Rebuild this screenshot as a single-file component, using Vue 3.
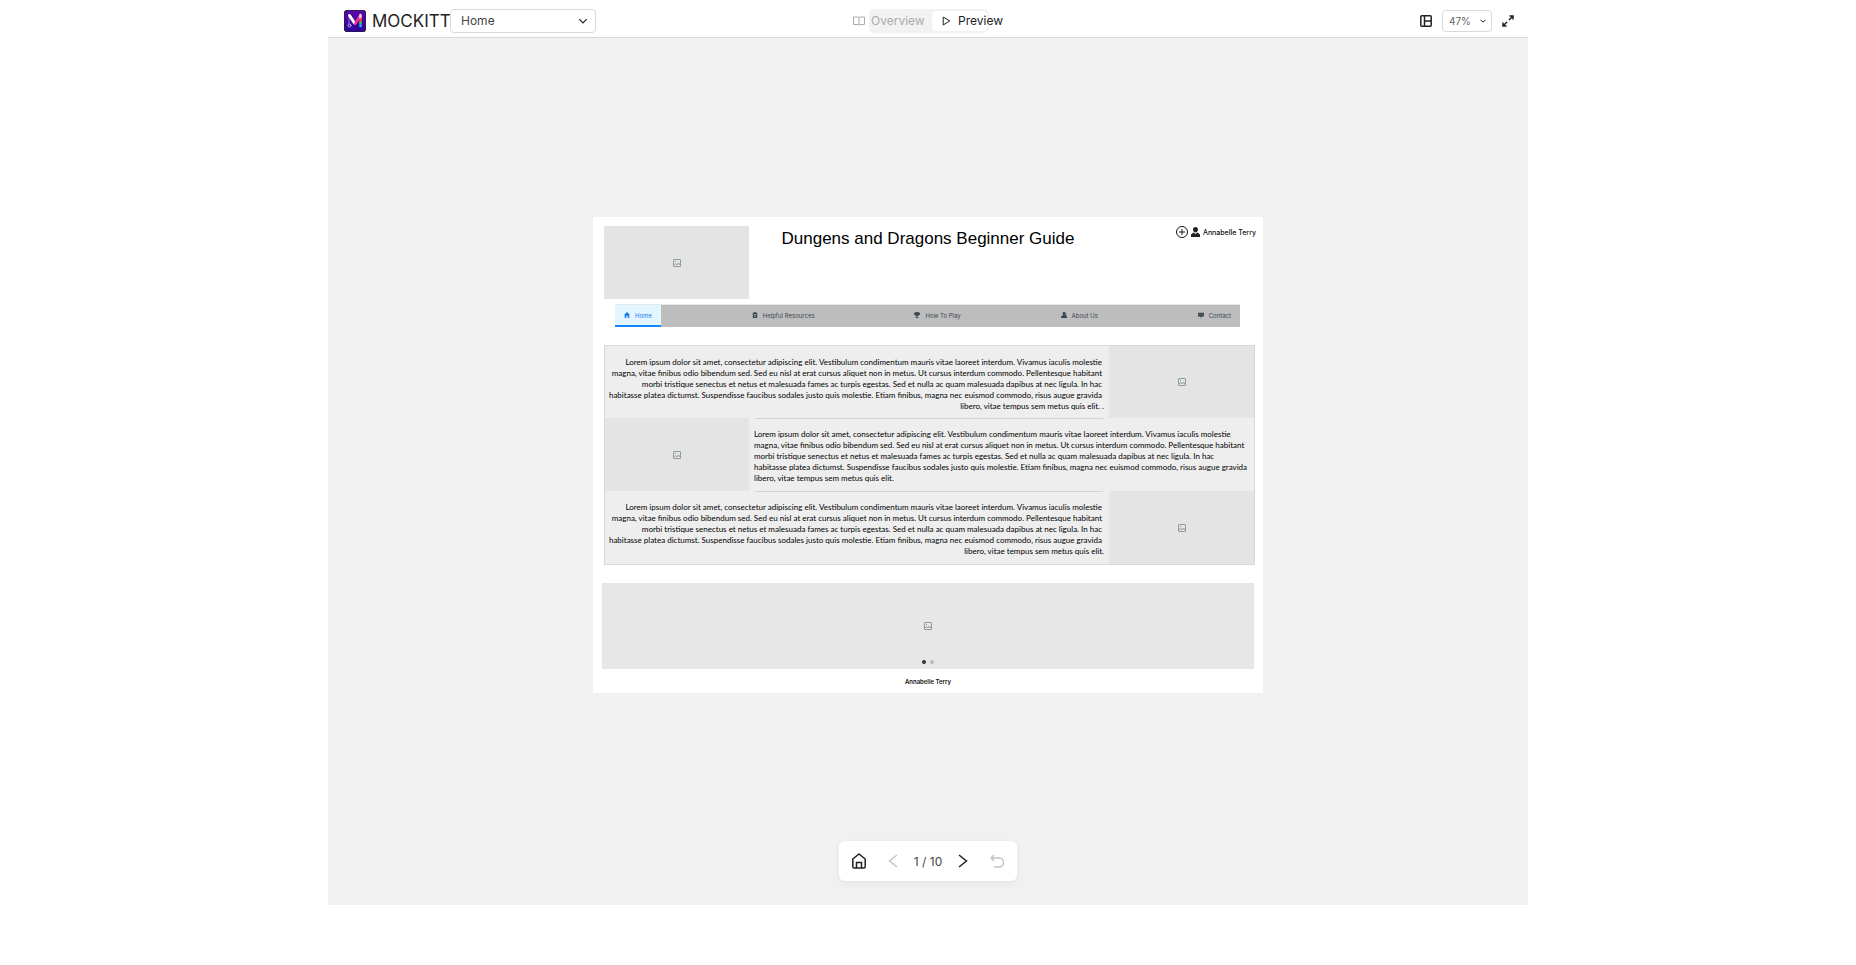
<script setup>
import { ref } from 'vue'

const screen = ref('Home')
const zoom = ref('47%')

const tabs = [
  { label: 'Home', icon: 'M4 0 8 4H7V8H5V5H3V8H1V4H0Z', active: true },
  { label: 'Helpful Resources', icon: 'M1 1H3V0H5V1H7V8H1ZM2.500 3V4H5.500V3ZM2.500 5V6H5.500V5Z' },
  { label: 'How To Play', icon: 'M2 0H6V1H8V3L6 5H4.700V7H6V8H2V7H3.300V5H2L0 3V1H2Z' },
  { label: 'About Us', icon: 'M3 0H5L6 2 5 4 8 6V8H0V6L3 4 2 2ZM6 1 7 2V4L8 5H6Z' },
  { label: 'Contact', icon: 'M0 1H8V6H5L4 8 3 6H0ZM2 3V4H3V3ZM5 3V4H6V3Z' }
]

const lorem = [
  'Lorem ipsum dolor sit amet, consectetur adipiscing elit. Vestibulum condimentum mauris vitae laoreet interdum. Vivamus iaculis molestie',
  'magna, vitae finibus odio bibendum sed. Sed eu nisl at erat cursus aliquet non in metus. Ut cursus interdum commodo. Pellentesque habitant',
  'morbi tristique senectus et netus et malesuada fames ac turpis egestas. Sed et nulla ac quam malesuada dapibus at nec ligula. In hac',
  'habitasse platea dictumst. Suspendisse faucibus sodales justo quis molestie. Etiam finibus, magna nec euismod commodo, risus augue gravida'
]
const rows = [
  { flip: false, last: 'libero, vitae tempus sem metus quis elit. .' },
  { flip: true, last: 'libero, vitae tempus sem metus quis elit.' },
  { flip: false, last: 'libero, vitae tempus sem metus quis elit.' }
]
</script>

<template>
  <div class="app">
    <header class="bar">
      <div class="bar-left">
        <svg class="logo" viewBox="0 0 22 22" aria-hidden="true">
          <defs>
            <linearGradient id="logo-bg" x1="0" y1="0" x2="0" y2="1">
              <stop offset="0" stop-color="#5a08a8" />
              <stop offset="1" stop-color="#2c0599" />
            </linearGradient>
          </defs>
          <rect width="22" height="22" rx="4" fill="url(#logo-bg)" />
          <g fill="none" stroke-linecap="round">
            <path d="M5 15V7" stroke="#8d6ad0" stroke-width="1" />
            <circle cx="5.500" cy="15.500" r="1.500" stroke="#b9a5e6" stroke-width="1" />
            <path d="M5.500 5.500 10.500 13" stroke="#fff" stroke-width="3" />
            <path d="M11.500 13.500 15.500 6.500" stroke="#f02f9c" stroke-width="2.600" />
            <path d="M16.500 5V7.500" stroke="#ffc2d4" stroke-width="2.600" />
            <path d="M16.500 9.500V11" stroke="#f44" stroke-width="2.600" />
            <path d="M16.500 12.500V13.500" stroke="#35c759" stroke-width="2.600" />
            <path d="M16.500 15.500V16" stroke="#29b6f6" stroke-width="2.600" />
          </g>
        </svg>
        <span class="brand">MOCKITT</span>
        <div class="pick pick-screen">
          <select v-model="screen" aria-label="Screen">
            <option>Home</option>
          </select>
          <svg viewBox="0 0 8 8" aria-hidden="true"><path d="M1 2.500 4 5.500 7 2.500" /></svg>
        </div>
      </div>

      <div class="modes">
        <button type="button" class="mode mode-overview">
          <svg width="12" height="10" viewBox="0 0 12 10" aria-hidden="true">
            <path d="M.5 1H5L6 1.500 7 1H11.500V8.500H7L6 9.500 5 8.500H.5ZM6 1.500V9" />
          </svg>
          Overview
        </button>
        <button type="button" class="mode mode-preview">
          <svg width="9" height="10" viewBox="0 0 9 10" aria-hidden="true">
            <path d="M1.200 1V9L7.800 5Z" />
          </svg>
          Preview
        </button>
      </div>

      <div class="bar-right">
        <button type="button" class="icon" aria-label="Layout">
          <svg width="12" height="12" viewBox="0 0 12 12">
            <rect x=".8" y=".8" width="10.400" height="10.400" rx="1" />
            <path d="M4.500 1V11M4.500 6H11" />
          </svg>
        </button>
        <div class="pick pick-zoom">
          <select v-model="zoom" aria-label="Zoom">
            <option>47%</option>
          </select>
          <svg viewBox="0 0 8 8" aria-hidden="true"><path d="M1.500 3 4 5 6.500 3" /></svg>
        </div>
        <button type="button" class="icon" aria-label="Full screen">
          <svg width="12" height="12" viewBox="0 0 12 12">
            <path d="M7 5 11 1M7.500 1H11V4.500M5 7 1 11M1 7.500V11H4.500" />
          </svg>
        </button>
      </div>
    </header>

    <main class="stage">
      <article class="page">
        <div class="top">
          <div class="ph"><svg viewBox="0 0 8 8"><rect x=".5" y=".5" width="7" height="7" rx=".5" /><path d="M1 6 2.500 4.500 4 6 5.500 4 7 6M2 2.500H3" /></svg></div>
          <h1>Dungens and Dragons Beginner Guide</h1>
          <div class="user">
            <button type="button" class="add" aria-label="Add">
              <svg width="12" height="12" viewBox="0 0 12 12"><circle cx="6" cy="6" r="5.500" /><path d="M6 3V9M3 6H9" /></svg>
            </button>
            <svg class="person" width="9" height="10" viewBox="0 0 9 10" aria-hidden="true">
              <path d="M4.500 0C6 0 7 1 7 2.500S6 5.500 4.500 5.500 2 4 2 2.500 3 0 4.500 0ZM2.500 5.500 4.500 7 6.500 5.500 9 7.500V10H0V7.500Z" />
            </svg>
            <span>Annabelle Terry</span>
          </div>
        </div>

        <nav class="tabs">
          <a v-for="t in tabs" :key="t.label" href="#" :class="{ active: t.active }">
            <svg width="6" height="6" viewBox="0 0 8 8" aria-hidden="true"><path fill-rule="evenodd" :d="t.icon" /></svg>
            {{ t.label }}
          </a>
        </nav>

        <section class="rows">
          <div v-for="(r, i) in rows" :key="i" class="row" :class="{ flip: r.flip }">
            <p>
              <span v-for="l in lorem" :key="l" class="line full">{{ l }}</span>
              <span class="line">{{ r.last }}</span>
            </p>
            <div class="ph"><svg viewBox="0 0 8 8"><rect x=".5" y=".5" width="7" height="7" rx=".5" /><path d="M1 6 2.500 4.500 4 6 5.500 4 7 6M2 2.500H3" /></svg></div>
            <hr v-if="i > 0">
          </div>
        </section>

        <section class="carousel">
          <svg class="pic" viewBox="0 0 8 8"><rect x=".5" y=".5" width="7" height="7" rx=".5" /><path d="M1 6 2.500 4.500 4 6 5.500 4 7 6M2 2.500H3" /></svg>
          <div class="dots">
            <button type="button" class="on" aria-label="Slide 1"></button>
            <button type="button" aria-label="Slide 2"></button>
          </div>
        </section>

        <footer>Annabelle Terry</footer>
      </article>

      <div class="pager">
        <button type="button" aria-label="Home">
          <svg width="14" height="16" viewBox="0 0 14 16"><path d="M.8 6 7 1 13.200 6V13.500Q13.200 15 12 15H2Q.8 15 .8 13.500ZM4.500 15V9.500H9.500V15" /></svg>
        </button>
        <div class="steps">
          <button type="button" class="off" aria-label="Previous">
            <svg width="10" height="14" viewBox="0 0 10 14"><path d="M9 1 1.500 7 9 13" /></svg>
          </button>
          <span class="count">1 / 10</span>
          <button type="button" aria-label="Next">
            <svg width="10" height="14" viewBox="0 0 10 14"><path d="M1 1 8.500 7 1 13" /></svg>
          </button>
        </div>
        <button type="button" class="off" aria-label="Restart">
          <svg width="14" height="14" viewBox="0 0 14 14"><path d="M4 1 1 4 4 7M1 4H9A4.500 4.500 0 0 1 9 13H4" /></svg>
        </button>
      </div>
    </main>
  </div>
</template>

<style>
body {
  background: #fff;
}
</style>

<style scoped>
* {
  box-sizing: border-box;
}
.app {
  display: flex;
  flex-direction: column;
  max-width: 1200px;
  height: calc(100vh - 60px);
  margin: 0 auto;
  font-family: Inter, "Liberation Sans", sans-serif;
  color: #222;
}
button {
  padding: 0;
  border: 0;
  background: none;
  font: inherit;
  color: inherit;
}
svg {
  display: block;
  flex: none;
  fill: none;
  stroke: currentColor;
}
.bar {
  display: grid;
  grid-template-columns: 1fr auto 1fr;
  align-items: center;
  height: 38px;
  padding: 4px 14px 0 16px;
  border-bottom: 1px solid #d9d9d9;
  background: #fff;
}
.bar-left,
.bar-right {
  display: flex;
  align-items: center;
}
.bar-right {
  justify-content: flex-end;
  gap: 10px;
}
.logo {
  width: 22px;
  height: 22px;
}
.brand {
  width: 78px;
  margin-left: 6px;
  font-size: 17px;
  font-weight: 400;
  white-space: nowrap;
  color: #222;
}
.pick {
  display: grid;
  align-items: center;
}
.pick > * {
  grid-area: 1 / 1;
}
.pick select {
  appearance: none;
  width: 100%;
  border: 1px solid #d9d9d9;
  border-radius: 4px;
  background: #fff;
  font-family: inherit;
  color: #444;
}
.pick svg {
  justify-self: end;
  pointer-events: none;
}
.pick-screen {
  width: 146px;
}
.pick-screen select {
  height: 24px;
  padding: 0 10px;
  font-size: 12px;
}
.pick-screen svg {
  width: 10px;
  height: 10px;
  margin-right: 8px;
}
.pick-zoom {
  width: 50px;
}
.pick-zoom select {
  height: 22px;
  padding: 0 6px;
  font-size: 10px;
  color: #666;
}
.pick-zoom svg {
  width: 8px;
  height: 8px;
  margin-right: 5px;
}
.icon svg {
  stroke-width: 1.500;
}
.modes {
  display: flex;
  width: 120px;
  height: 24px;
  padding: 2px;
  border-radius: 5px;
  background: #f2f2f2;
}
.mode {
  display: flex;
  align-items: center;
  font-size: 12px;
  white-space: nowrap;
}
.mode-overview {
  flex: none;
  gap: 6px;
  width: 79px;
  margin-left: -18px;
  color: #aaa;
}
.mode-preview {
  flex: 1;
  gap: 7px;
  min-width: 0;
  padding-left: 10px;
  border-radius: 4px;
  background: #fff;
}
.stage {
  position: relative;
  flex: 1;
  display: flex;
  align-items: center;
  justify-content: center;
  padding-bottom: 33px;
  background: #f1f1f1;
}
.page {
  width: 100%;
  max-width: 670px;
  padding-top: 9px;
  background: #fff;
  color: #111;
}
.ph {
  display: flex;
  align-items: center;
  justify-content: center;
  height: 73px;
  background: #e4e4e4;
}
.ph svg,
.pic {
  width: 8px;
  height: 8px;
  color: #8c9ba3;
}
.top {
  display: grid;
  grid-template-columns: 145px 1fr 149px;
  padding: 0 7px 0 11px;
}
h1 {
  margin: 3px 0 0;
  font-family: "Liberation Sans", Arial, sans-serif;
  font-size: 17px;
  line-height: 20px;
  font-weight: 400;
  text-align: center;
  white-space: nowrap;
  color: #000;
}
.user {
  display: flex;
  align-items: center;
  justify-content: flex-end;
  gap: 3px;
  height: 12px;
  font-size: 7px;
  font-weight: 500;
  white-space: nowrap;
}
.person {
  fill: #222;
  stroke: none;
}
.tabs {
  display: flex;
  justify-content: space-between;
  height: 23px;
  margin: 5px 23px 0 22px;
  border-top: 1px solid #e4e8ea;
  background: #bdbdbd;
}
.tabs a {
  display: flex;
  align-items: center;
  gap: 5px;
  padding: 0 9px;
  border-bottom: 2px solid transparent;
  font-size: 6px;
  text-decoration: none;
  white-space: nowrap;
  color: #3c4850;
}
.tabs a.active {
  border-color: #1487fa;
  background: #e3f5ff;
  color: #1478f0;
}
.tabs svg {
  fill: currentColor;
  stroke: none;
}
.rows {
  margin: 18px 8px 0 11px;
  border: 1px solid #d8d8d8;
  background: #eee;
}
.row {
  position: relative;
  display: grid;
  grid-template-columns: minmax(0, 1fr) 145px;
  height: 73px;
}
.row:first-child {
  height: 72px;
}
.row:first-child .ph {
  height: 72px;
}
.row.flip {
  grid-template-columns: 144px minmax(0, 1fr);
}
.row p {
  display: flex;
  flex-direction: column;
  align-items: flex-end;
  margin: 0;
  padding: 11px 5px 0 0;
  font-family: Lato, "Liberation Sans", sans-serif;
  font-size: 8px;
  line-height: 11px;
  white-space: nowrap;
  color: #000;
}
.row.flip p {
  order: 2;
  align-items: flex-start;
  padding: 11px 0 0 5px;
}
.line.full {
  padding-right: 2px;
}
.row hr {
  position: absolute;
  top: 0;
  left: 150px;
  right: 151px;
  margin: 0;
  border: 0;
  border-top: 1px solid #d3d3d3;
}
.carousel {
  position: relative;
  display: flex;
  align-items: center;
  justify-content: center;
  height: 86px;
  margin: 18px 9px 0;
  background: #e7e7e7;
}
.dots {
  position: absolute;
  bottom: 5px;
  display: flex;
  gap: 4px;
}
.dots button {
  width: 4px;
  height: 4px;
  border-radius: 50%;
  background: #bbb;
}
.dots .on {
  background: #333;
}
footer {
  height: 24px;
  padding-top: 1px;
  font-size: 6px;
  line-height: 24px;
  font-weight: 600;
  text-align: center;
}
.pager {
  position: absolute;
  bottom: 24px;
  display: flex;
  align-items: center;
  justify-content: space-between;
  width: 178px;
  height: 40px;
  padding: 0 13px;
  border-radius: 6px;
  background: #fff;
  box-shadow: 0 2px 6px rgba(0, 0, 0, 0.06);
}
.pager svg {
  stroke-width: 1.500;
}
.pager .off {
  color: #c4c4c4;
}
.steps {
  display: flex;
  align-items: center;
  gap: 16px;
}
.count {
  font-size: 12px;
  color: #444;
}
</style>
